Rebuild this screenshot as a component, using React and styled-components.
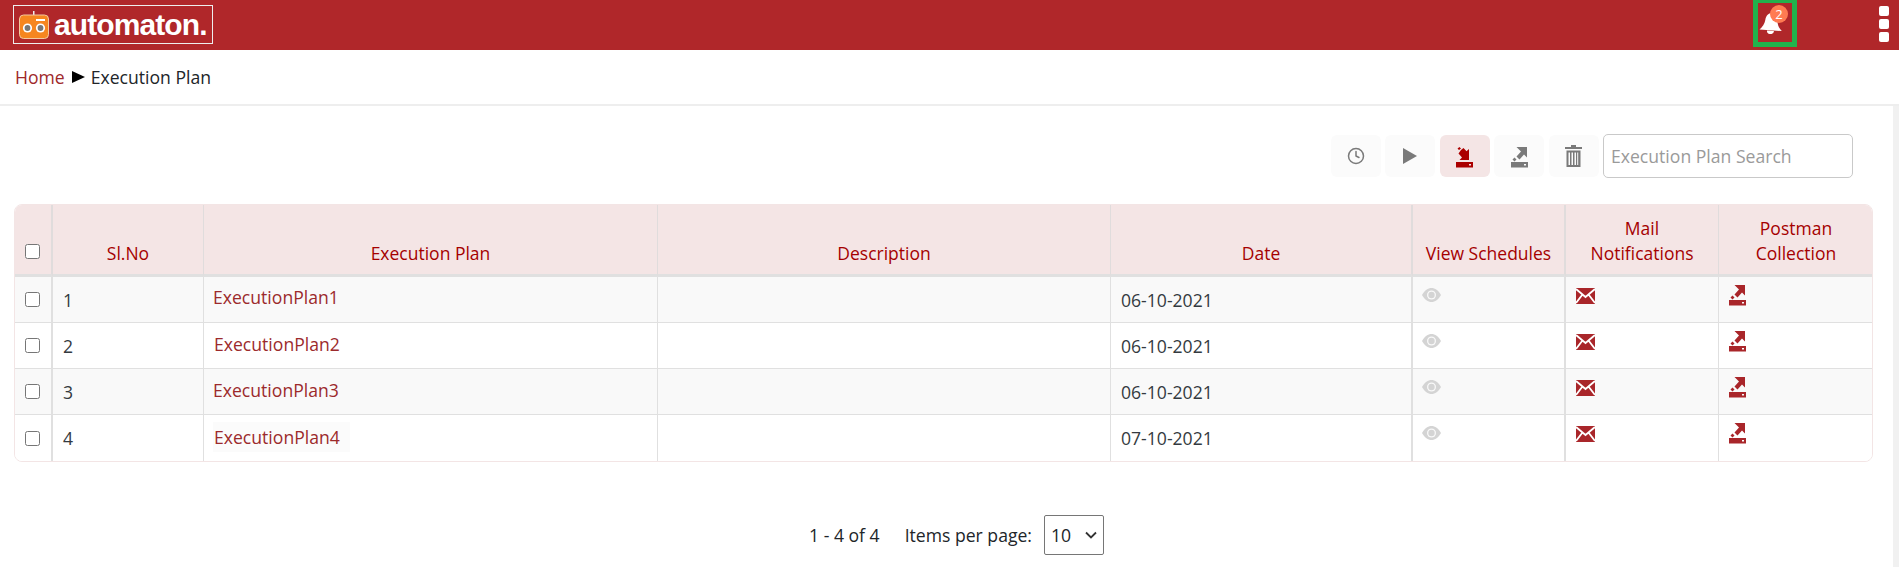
import React from "react";
import styled, { createGlobalStyle } from "styled-components";
import { Clock } from "lucide-react";

const Global = createGlobalStyle`
  html, body { margin: 0; padding: 0; background: #fff; overflow: hidden; }
  body { font-family: "Open Sans", "Noto Sans", sans-serif; font-size: 17.6px; color: #212529; }
  * { box-sizing: border-box; }
`;

const Page = styled.div`
  width: 1899px;
  height: 567px;
  overflow: hidden;
  display: flex;
  flex-direction: column;
`;
const TopBar = styled.header`
  height: 50px;
  flex: none;
  background: #b0272a;
  display: flex;
  align-items: center;
  padding: 0 10px 1px 13px;
`;
const LogoBox = styled.div`
  width: 200px;
  height: 39px;
  border: 1px solid #eee;
  display: flex;
  align-items: center;
  gap: 5px;
  padding-left: 5px;
`;
const LogoText = styled.span`
  font-family: "Liberation Sans", Arial, sans-serif;
  font-weight: 700;
  font-size: 30px;
  letter-spacing: -0.9px;
  line-height: 1;
  color: #fff;
`;
const BellWrap = styled.div`
  position: relative;
  margin-left: auto;
  width: 44px;
  height: 47px;
  align-self: flex-start;
  border: 5px solid #22b14c;
  border-top-width: 3px;
  margin-right: 82px;
`;
const Badge = styled.span`
  position: absolute;
  left: 12px;
  top: 2px;
  width: 18px;
  height: 18px;
  border-radius: 50%;
  background: #ff7b52;
  color: #fff;
  font-size: 13px;
  line-height: 18px;
  text-align: center;
`;
const Kebab = styled.div`
  display: flex;
  flex-direction: column;
  gap: 3px;
  margin-top: -1px;
`;
const Dot = styled.span`
  width: 10px;
  height: 10px;
  border-radius: 2px;
  background: #fff;
`;
const Breadcrumb = styled.nav`
  height: 56px;
  flex: none;
  border-bottom: 2px solid #eeeeee;
  display: flex;
  align-items: center;
  padding: 0 0 0 15px;
  line-height: 24px;
`;
const Crumb = styled.a`
  color: #a0282a;
`;
const Arrow = styled.span`
  width: 0;
  height: 0;
  margin: 0 6px 0 7px;
  border-left: 13px solid #000;
  border-top: 6.5px solid transparent;
  border-bottom: 6.5px solid transparent;
`;
const Body = styled.div`
  flex: 1;
  display: flex;
  min-height: 0;
`;
const Main = styled.main`
  flex: 1;
  min-width: 0;
  padding: 28px 20px 0 14px;
`;
const ScrollTrack = styled.div`
  width: 6px;
  flex: none;
  background: #f1f1f1;
`;
const Toolbar = styled.div`
  display: flex;
  justify-content: flex-end;
  align-items: center;
  gap: 4.5px;
  height: 44px;
  padding-right: 20px;
`;
const ToolButton = styled.button`
  width: 50px;
  height: 42px;
  border: 0;
  padding: ${(p) => (p.$low ? "2px 0 0" : "0")};
  border-radius: 6px;
  background: ${(p) => (p.$active ? "#f4e5e5" : "#fbfbfb")};
  color: ${(p) => (p.$active ? "#ab0000" : "#7a7a7a")};
  display: flex;
  align-items: center;
  justify-content: center;
`;
const Search = styled.input`
  width: 250px;
  height: 44px;
  border: 1px solid #c9c9c9;
  border-radius: 5px;
  padding: 0 7px;
  font: 17.6px "Open Sans", sans-serif;
  &::placeholder { color: #9a9a9a; opacity: 1; }
`;
const TableFrame = styled.div`
  width: 1859px;
  margin-top: 26px;
  border: 1px solid #f3e5e5;
  border-radius: 8px;
  overflow: hidden;
`;
const Table = styled.table`
  width: 1859px;
  margin: -1px 0 0 -1px;
  border-collapse: separate;
  border-spacing: 0;
  table-layout: fixed;
`;
const HeadRow = styled.tr`
  background: #f4e5e5;
  height: 73px;
`;
const Th = styled.th`
  padding: 0 2px 8px;
  vertical-align: bottom;
  text-align: center;
  font-weight: 500;
  font-size: 17.5px;
  line-height: 25px;
  color: #a50000;
  border-right: ${(p) => p.$thick || 1}px solid #e0dcdc;
  border-bottom: 3px solid #e0e0e0;
  &:last-child { border-right: 0; }
`;
const Row = styled.tr`
  height: 46px;
  background: ${(p) => (p.$odd ? "#f9f9f9" : "#fff")};
`;
const Td = styled.td`
  padding: 0 0 0 10px;
  font-size: 17.6px;
  color: #343a40;
  border-right: ${(p) => p.$thick || 1}px solid #e0e0e0;
  border-bottom: 1px solid #e0e0e0;
  &:last-child { border-right: 0; }
  tr:last-child > & { border-bottom: 0; }
`;
const CheckCell = styled(Td)`
  padding-left: 11px;
`;
const HeadCheckCell = styled(Th)`
  text-align: left;
  padding: 0 0 15px 11px;
`;
const Check = styled.input.attrs({ type: "checkbox" })`
  width: 15px;
  height: 15px;
  margin: 0;
  display: block;
`;
const PlanLink = styled.a`
  display: inline-block;
  color: #9c2a2c;
  padding: 3px 10px 3px ${(p) => p.$nudge}px;
  margin-left: -1px;
  background: ${(p) => (p.$plate ? "#fbfbfb" : "transparent")};
  position: relative;
  top: ${(p) => p.$lift}px;
`;
const IconCell = styled(Td)`
  vertical-align: top;
  padding-top: ${(p) => p.$top}px;
  padding-left: ${(p) => p.$left || 10}px;
  line-height: 0;
  color: #a9262a;
`;
const Pager = styled.div`
  margin-top: 53px;
  display: flex;
  align-items: center;
  justify-content: center;
  padding-left: 26px;
`;
const PagerLabel = styled.span`
  margin-left: 25px;
  margin-right: 12px;
`;
const PageSelect = styled.div`
  width: 60px;
  height: 40px;
  border: 1px solid #767676;
  border-radius: 2px;
  padding: 0 6px;
  display: flex;
  align-items: center;
  justify-content: space-between;
`;

const Remote = () => (
  <svg width="30" height="28" viewBox="0 0 30 28">
    <rect x="14" y="0" width="1.5" height="6" fill="#eee" />
    <rect x="0.5" y="4" width="29" height="23.5" rx="4" fill="#f6861f" stroke="#f3c9a0" />
    <circle cx="8.5" cy="17" r="4.6" fill="#fff" />
    <circle cx="8.5" cy="17" r="2.9" fill="#777" />
    <circle cx="21.5" cy="17" r="4.6" fill="#fff" />
    <circle cx="21.5" cy="17" r="2.9" fill="#777" />
    <rect x="17" y="8" width="9" height="2" fill="#fff" />
  </svg>
);
const BellIcon = styled.svg`
  position: absolute;
  left: 1px;
  top: 9px;
`;
const Bell = () => (
  <BellIcon width="23" height="22" viewBox="0 0 23 22">
    <path d="M13 1C9 1 7 4 6.300 8 5.600 12 3.500 15 .5 17.500L22.800 19C20 16.500 18.500 13 18.500 9 18.500 4 16.500 1 13 1z" fill="#fff" />
    <path d="M8 18.500a3.500 3.300 0 0 0 7 .5z" fill="#fff" />
  </BellIcon>
);
const Play = () => (
  <svg width="14" height="16" viewBox="0 0 14 16"><path d="M0 0l14 8-14 8z" fill="currentColor" /></svg>
);
const Tray = () => (
  <path d="M0 15h17v5.500H0zM13 17h2v1.500h-2z" fill="currentColor" fillRule="evenodd" />
);
const DownloadIcon = () => (
  <svg width="17" height="21" viewBox="0 0 17 21">
    <Tray />
    <path d="M1.500 1.500l2-1.500 1.500 1.500-2 1.500z M5 3l2.500-2 3 3.200L13 2v11H3.500l2.500-2.500L2.500 6.500z" fill="currentColor" />
  </svg>
);
const UploadIcon = () => (
  <svg width="17" height="21" viewBox="0 0 17 21">
    <Tray />
    <path d="M5.500 0H16v10.500l-3-3-4.500 5-3-3L10 4.500z M1.500 12.500l2-2 2 2-2 2z" fill="currentColor" />
  </svg>
);
const Trash = () => (
  <svg width="17" height="22" viewBox="0 0 17 22">
    <path d="M6 0h5v2h6v2H0V2h6zM1.500 5.500h14V22h-14zM3.500 7.500v12.500h1.500V7.500zm3 0v12.500h1.500V7.500zm3 0v12.500h1.500V7.500zm2.700 0v12.500h1V7.500z" fill="currentColor" fillRule="evenodd" />
  </svg>
);
const Eye = () => (
  <svg width="19" height="14" viewBox="0 0 19 14">
    <path d="M0 7C2.500 2.500 6 0 9.500 0S16.500 2.500 19 7C16.500 11.500 13 14 9.500 14S2.500 11.500 0 7z" fill="#d4d4d4" />
    <circle cx="9.500" cy="7" r="4.500" fill="#f9f9f9" />
    <circle cx="9.500" cy="7" r="3.200" fill="#d4d4d4" />
  </svg>
);
const Mail = () => (
  <svg width="19" height="16" viewBox="0 0 19 16">
    <path d="M0 0h19v16H0z" fill="currentColor" />
    <path d="M0 1l9.500 8L19 1M0 15l6.500-8.500M19 15l-6.500-8.500" stroke="#fff" strokeWidth="1.800" fill="none" />
  </svg>
);
const Chevron = () => (
  <svg width="12" height="8" viewBox="0 0 12 8">
    <path d="M1 1.500l5 5 5-5" stroke="#333" strokeWidth="1.800" fill="none" />
  </svg>
);

const rows = [
  { n: 1, plan: "ExecutionPlan1", date: "06-10-2021", nudge: 0, lift: -3 },
  { n: 2, plan: "ExecutionPlan2", date: "06-10-2021", nudge: 1, lift: -2 },
  { n: 3, plan: "ExecutionPlan3", date: "06-10-2021", nudge: 0, lift: -2 },
  { n: 4, plan: "ExecutionPlan4", date: "07-10-2021", nudge: 1, lift: -1, plate: true },
];

export default function App() {
  return (
    <Page>
      <Global />
      <TopBar>
        <LogoBox>
          <Remote />
          <LogoText>automaton.</LogoText>
        </LogoBox>
        <BellWrap>
          <Bell />
          <Badge>2</Badge>
        </BellWrap>
        <Kebab>
          <Dot />
          <Dot />
          <Dot />
        </Kebab>
      </TopBar>
      <Breadcrumb>
        <Crumb>Home</Crumb>
        <Arrow />
        <span>Execution Plan</span>
      </Breadcrumb>
      <Body>
        <Main>
          <Toolbar>
            <ToolButton><Clock size={18} strokeWidth={2} /></ToolButton>
            <ToolButton><Play /></ToolButton>
            <ToolButton $active $low><DownloadIcon /></ToolButton>
            <ToolButton $low><UploadIcon /></ToolButton>
            <ToolButton><Trash /></ToolButton>
            <Search placeholder="Execution Plan Search" />
          </Toolbar>
          <TableFrame>
            <Table>
              <colgroup>
                <col style={{ width: 39 }} />
                <col style={{ width: 151 }} />
                <col style={{ width: 454 }} />
                <col style={{ width: 453 }} />
                <col style={{ width: 302 }} />
                <col style={{ width: 153 }} />
                <col style={{ width: 153 }} />
                <col />
              </colgroup>
              <thead>
                <HeadRow>
                  <HeadCheckCell $thick={2}><Check /></HeadCheckCell>
                  <Th>Sl.No</Th>
                  <Th>Execution Plan</Th>
                  <Th>Description</Th>
                  <Th $thick={2}>Date</Th>
                  <Th $thick={2}>View Schedules</Th>
                  <Th>Mail<br />Notifications</Th>
                  <Th>Postman<br />Collection</Th>
                </HeadRow>
              </thead>
              <tbody>
                {rows.map((r) => (
                  <Row key={r.n} $odd={r.n % 2 === 1}>
                    <CheckCell $thick={2}><Check /></CheckCell>
                    <Td>{r.n}</Td>
                    <Td><PlanLink $nudge={r.nudge} $lift={r.lift} $plate={r.plate}>{r.plan}</PlanLink></Td>
                    <Td />
                    <Td $thick={2}>{r.date}</Td>
                    <IconCell $thick={2} $top={11} $left={9}><Eye /></IconCell>
                    <IconCell $top={11}><Mail /></IconCell>
                    <IconCell $top={8}><UploadIcon /></IconCell>
                  </Row>
                ))}
              </tbody>
            </Table>
          </TableFrame>
          <Pager>
            <span>1 - 4 of 4</span>
            <PagerLabel>Items per page:</PagerLabel>
            <PageSelect>
              <span>10</span>
              <Chevron />
            </PageSelect>
          </Pager>
        </Main>
        <ScrollTrack />
      </Body>
    </Page>
  );
}
